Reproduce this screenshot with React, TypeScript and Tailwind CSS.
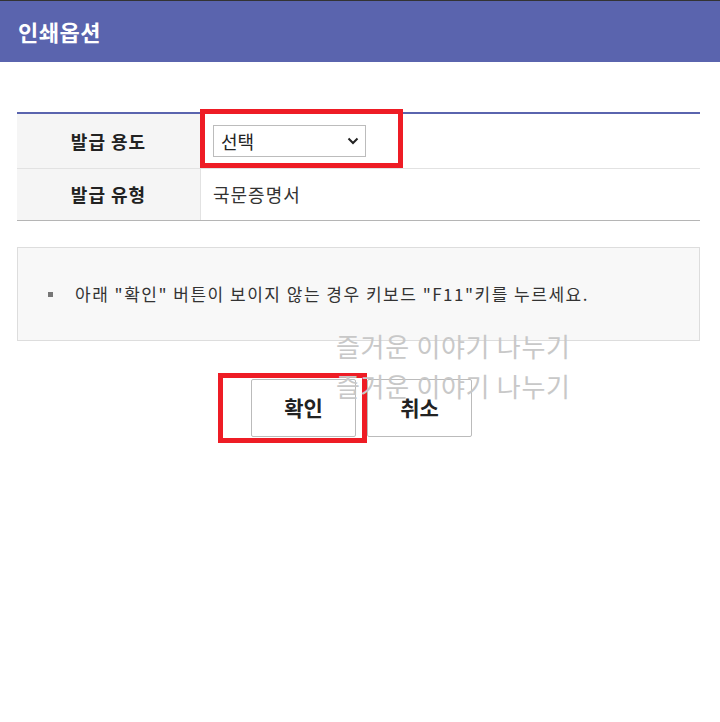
import React from 'react';

const font = { fontFamily: '"Noto Sans CJK KR", "Noto Sans", sans-serif' };

export default function App() {
  return (
    <div className="relative w-[720px] h-[722px] bg-white overflow-hidden" style={font}>
      {/* 상단 타이틀 */}
      <div className="h-[62px] border-t border-[#333] bg-[#5a64ae] flex items-center pl-[18px]">
        <h1 className="text-[22px] tracking-[0.5px] font-bold text-white">인쇄옵션</h1>
      </div>

      <div className="ml-[17px] mr-[20px]">
        {/* 옵션 테이블 */}
        <div className="mt-[50px] border-t-2 border-[#5a64ae] border-b border-b-[#b5b5b5]">
          <div className="flex h-[55px] border-b border-[#e2e2e2]">
            <div className="w-[184px] bg-[#f5f5f5] border-r border-[#e2e2e2] flex items-center justify-center text-[18px] tracking-[1px] font-bold text-[#222]">
              발급 용도
            </div>
            <div className="flex items-center pl-[12px]">
              <div className="w-[153px] h-[32px] border border-[#bcbcbc] flex items-center justify-between pl-[7px] pr-[6px] text-[18px] text-[#222]">
                <span>선택</span>
                <svg width="12" height="8" viewBox="0 0 12 8" fill="none">
                  <path d="M1.5 1.5 6 6l4.5-4.5" stroke="#222" strokeWidth="2" />
                </svg>
              </div>
            </div>
          </div>
          <div className="flex h-[51px]">
            <div className="w-[184px] bg-[#f5f5f5] border-r border-[#e2e2e2] flex items-center justify-center text-[18px] tracking-[1px] font-bold text-[#222]">
              발급 유형
            </div>
            <div className="flex items-center pl-[12px] text-[18px] tracking-[1px] text-[#333]">국문증명서</div>
          </div>
        </div>

        {/* 안내 문구 */}
        <div className="mt-[26px] h-[94px] border border-[#dddddd] bg-[#f8f8f8] flex items-center pl-[30px]">
          <span className="w-[5px] h-[5px] bg-[#777] mr-[22px]" />
          <p className="text-[17px] tracking-[1.5px] text-[#333]">아래 "확인" 버튼이 보이지 않는 경우 키보드 "F11"키를 누르세요.</p>
        </div>

        {/* 버튼 */}
        <div className="mt-[38px] flex justify-center gap-[11px] pl-[6px]">
          <button className="w-[105px] h-[58px] border border-[#bbbbbb] rounded-[2px] bg-white text-[21px] font-bold text-[#222]">
            확인
          </button>
          <button className="w-[105px] h-[58px] border border-[#bbbbbb] rounded-[2px] bg-white text-[21px] font-bold text-[#222]">
            취소
          </button>
        </div>
      </div>

      {/* 강조 표시 */}
      <div className="absolute left-[200px] top-[109px] w-[203px] h-[59px] border-[5px] border-[#ee1c25] pointer-events-none" />
      <div className="absolute left-[218px] top-[373px] w-[149px] h-[70px] border-[5px] border-[#ee1c25] pointer-events-none" />

      {/* 워터마크 */}
      <div className="absolute left-[336px] top-[330px] text-[26px] leading-[32px] tracking-[0.7px] text-[#c8c8c8] pointer-events-none">
        즐거운 이야기 나누기
      </div>
      <div className="absolute left-[336px] top-[370px] text-[26px] leading-[32px] tracking-[0.7px] text-[#c8c8c8] pointer-events-none">
        즐거운 이야기 나누기
      </div>
    </div>
  );
}
